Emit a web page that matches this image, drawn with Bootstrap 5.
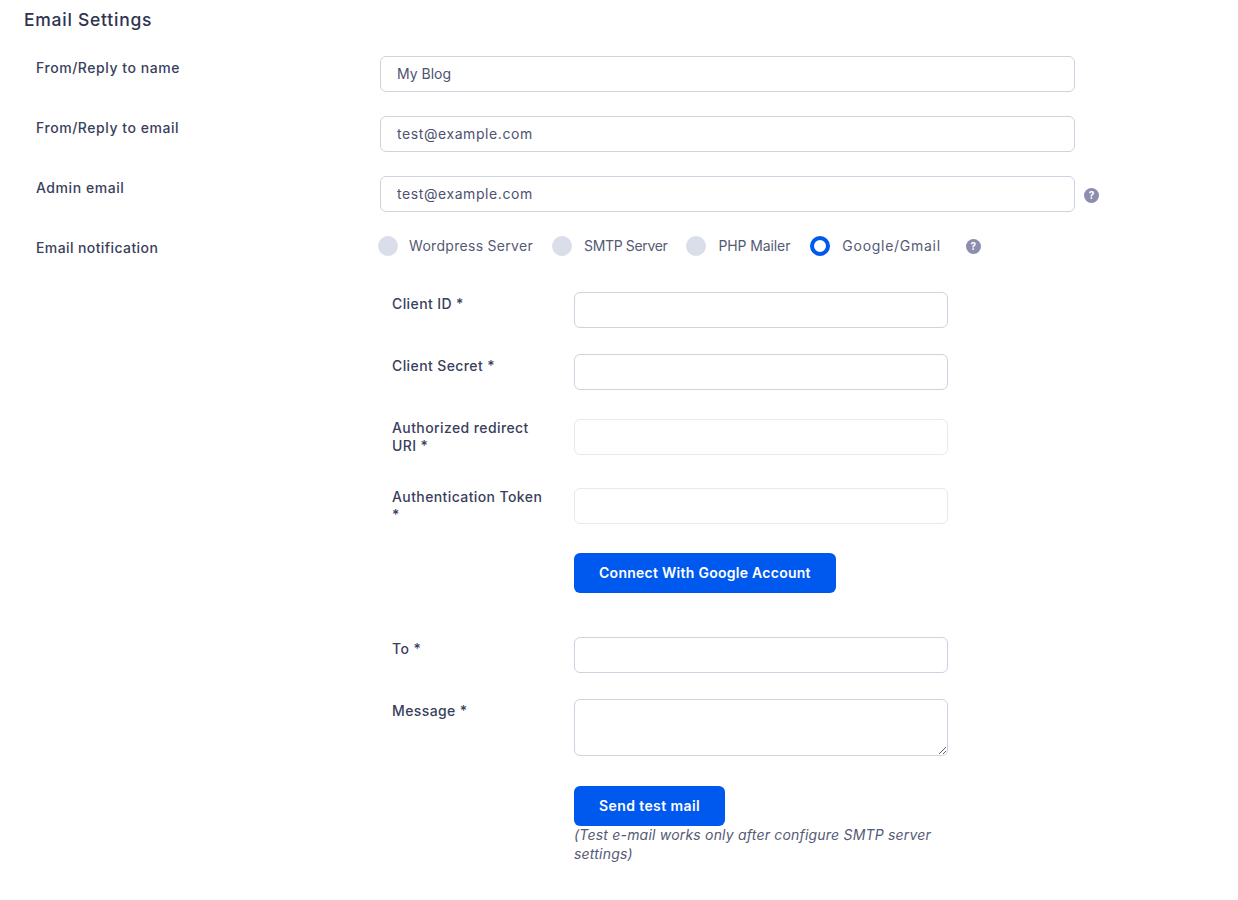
<!DOCTYPE html>
<html lang="en">
<head>
<meta charset="utf-8">
<title>Email Settings</title>
<link href="https://cdn.jsdelivr.net/npm/bootstrap@5.3.0/dist/css/bootstrap.min.css" rel="stylesheet">
<style>
body{font-family:"Inter","Liberation Sans",sans-serif;background:#fff;color:#3a3f5c;font-size:14px}
.pg{padding:9px 24px 0 24px}
.ttl{font-size:17.5px;font-weight:500;line-height:22px;color:#2f3450;margin:0 0 25px;letter-spacing:.75px}
.outer-row{display:flex;padding-left:12px;margin-bottom:24px}
.outer-lbl{width:344px;flex:none;font-size:14px;letter-spacing:.55px;font-weight:500;color:#3a3f5c;line-height:20px;padding-top:2px}
.lbl-n{letter-spacing:.4px}
.fld{width:695px;height:36px;flex:none;border:1px solid #ced3e0;border-radius:6px;color:#4d5270;font-size:14px;padding:0 16px 1px;box-shadow:none;letter-spacing:.58px}
.fld-n{letter-spacing:0}
.hlp{width:15px;height:15px;border-radius:50%;background:#8d8db0;color:#fff;font-size:10px;font-weight:700;line-height:15px;text-align:center;flex:none;display:inline-block}
.hlp-a{margin:12px 0 0 9px}
.hlp-b{margin-left:6px}
.rad-row{display:flex;align-items:center;margin-left:-2px;height:20px}
.rad{width:20px;height:20px;margin:0 11px 0 0;flex:none;background:#d9deea;border:0;appearance:none;border-radius:50%;float:none}
.rad:checked{background:#fff;border:4.5px solid #0059ee;background-image:none}
.rad-lbl{font-size:14px;color:#555a75;margin-right:19px;line-height:20px;white-space:nowrap}
.w-wp{letter-spacing:.3px}
.w-sm{letter-spacing:-.35px;margin-left:1px;margin-right:19px}
.w-ph{letter-spacing:-.1px;margin-left:1px;margin-right:20px}
.w-gg{letter-spacing:.72px;margin-left:1px}
.sub{margin-left:368px;width:556px;margin-top:34px}
.sub-row{display:flex}
.sub-lbl{width:182px;flex:none;font-size:14px;letter-spacing:.4px;font-weight:500;line-height:18px;color:#3a3f5c;padding:3px 26px 0 0}
.sub-lbl.two{padding-top:0}
.sub-fld{width:374px;height:36px;flex:none;border:1px solid #ced3e0;border-radius:6px;box-shadow:none}
.sub-fld.ro{border-color:#e6e9f1;background:#fff}
textarea.sub-fld{height:57px}
.act{background:#0059ee;border:0;border-radius:6px;color:#fff;font-weight:600;font-size:14px;height:40px;padding:0 25px 1px;letter-spacing:.27px}
.act-b{letter-spacing:.4px}
.act:hover{background:#0059ee;color:#fff}
.nt{font-style:italic;font-size:14px;line-height:19px;color:#555a75;margin:-1px 0 0;width:374px;letter-spacing:.2px}
.s1{margin-bottom:26px}
.s2{margin-bottom:29px}
.s3{margin-bottom:33px}
.s4{margin-bottom:29px}
.s5{margin-bottom:44px}
.s6{margin-bottom:26px}
.s7{margin-bottom:30px}
</style>
</head>
<body>
<div class="pg">
  <h5 class="ttl">Email Settings</h5>
  <div class="outer-row align-items-start">
    <label class="outer-lbl">From/Reply to name</label>
    <input class="form-control fld fld-n" type="text" value="My Blog">
  </div>
  <div class="outer-row align-items-start">
    <label class="outer-lbl">From/Reply to email</label>
    <input class="form-control fld" type="text" value="test@example.com">
  </div>
  <div class="outer-row align-items-start">
    <label class="outer-lbl">Admin email</label>
    <input class="form-control fld" type="text" value="test@example.com">
    <span class="hlp hlp-a">?</span>
  </div>
  <div class="outer-row align-items-start mb-0">
    <label class="outer-lbl lbl-n">Email notification</label>
    <div class="rad-row">
      <input class="form-check-input rad" type="radio" name="m"><span class="rad-lbl w-wp">Wordpress Server</span>
      <input class="form-check-input rad" type="radio" name="m"><span class="rad-lbl w-sm">SMTP Server</span>
      <input class="form-check-input rad" type="radio" name="m"><span class="rad-lbl w-ph">PHP Mailer</span>
      <input class="form-check-input rad" type="radio" name="m" checked><span class="rad-lbl w-gg">Google/Gmail</span>
      <span class="hlp hlp-b">?</span>
    </div>
  </div>
  <div class="sub">
    <div class="sub-row s1"><label class="sub-lbl">Client ID *</label><input class="form-control sub-fld" type="text"></div>
    <div class="sub-row s2"><label class="sub-lbl">Client Secret *</label><input class="form-control sub-fld" type="text"></div>
    <div class="sub-row s3"><label class="sub-lbl two">Authorized redirect URI *</label><input class="form-control sub-fld ro" type="text" readonly></div>
    <div class="sub-row s4"><label class="sub-lbl two">Authentication Token *</label><input class="form-control sub-fld ro" type="text" readonly></div>
    <div class="sub-row s5"><div class="sub-lbl"></div><button class="btn act" type="button">Connect With Google Account</button></div>
    <div class="sub-row s6"><label class="sub-lbl">To *</label><input class="form-control sub-fld" type="text"></div>
    <div class="sub-row s7"><label class="sub-lbl">Message *</label><textarea class="form-control sub-fld"></textarea></div>
    <div class="sub-row"><div class="sub-lbl"></div><div><button class="btn act act-b" type="button">Send test mail</button><p class="nt">(Test e-mail works only after configure SMTP server settings)</p></div></div>
  </div>
</div>
<script src="https://cdn.jsdelivr.net/npm/bootstrap@5.3.0/dist/js/bootstrap.bundle.min.js"></script>
</body>
</html>
